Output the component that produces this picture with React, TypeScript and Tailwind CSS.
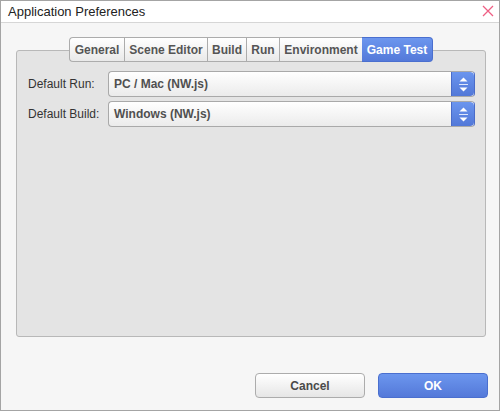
import { ReactNode } from "react"

const tabs = [
  { label: "General", w: "w-[55px]" },
  { label: "Scene Editor", w: "w-[83px]" },
  { label: "Build", w: "w-[39px]" },
  { label: "Run", w: "w-[33px]" },
  { label: "Environment", w: "w-[83px]" },
  { label: "Game Test", w: "w-[71px]", active: true },
]

const Spinner = () => (
  <div className="flex h-full w-[23px] flex-col items-center justify-center gap-[2px] rounded-r-[4px] border-l border-[#4a6cc9] bg-gradient-to-b from-[#6b95ee] to-[#5278d8]">
    <svg width="9" height="5" viewBox="0 0 9 5"><path d="M0.5 4.5 L4.5 0.5 L8.5 4.5 Z" fill="#fff" /></svg>
    <div className="h-px w-[9px] bg-[#dfe7fa]" />
    <svg width="9" height="5" viewBox="0 0 9 5"><path d="M0.5 0.5 L4.5 4.5 L8.5 0.5 Z" fill="#fff" /></svg>
  </div>
)

const SelectRow = ({ label, value }: { label: string; value: string }) => (
  <div className="flex items-center">
    <span className="w-[80px] text-[12px] text-[#333]">{label}</span>
    <div className="flex h-[26px] w-[367px] items-center overflow-hidden rounded-[4px] border border-[#a9a9a9] border-r-[#4a6cc9] bg-gradient-to-b from-white to-[#ebebeb]">
      <span className="flex-1 pl-[5px] text-[12px] font-bold text-[#505050]">{value}</span>
      <Spinner />
    </div>
  </div>
)

const Btn = ({ children, primary }: { children: ReactNode; primary?: boolean }) => (
  <button
    className={
      primary
        ? "h-[25px] w-[110px] rounded-[4px] border border-[#4a6fcf] bg-gradient-to-b from-[#6c96ee] to-[#5479d9] text-[12px] font-bold text-white"
        : "h-[25px] w-[110px] rounded-[4px] border border-[#acacac] bg-gradient-to-b from-white to-[#e6e6e6] text-[12px] font-bold text-[#4a4a4a]"
    }
  >
    {children}
  </button>
)

export default function App() {
  return (
    <div className="flex h-[411px] w-[500px] flex-col border border-[#a4a4a4] bg-[#f6f6f6] font-['Liberation_Sans',Arial,sans-serif]">
      <div className="flex h-[22px] items-center justify-between border-b border-[#d6d6d6] bg-white pl-[7px] pr-[5px]">
        <span className="text-[13px] text-[#222]">Application Preferences</span>
        <svg width="12" height="12" viewBox="0 0 12 12" className="mb-px">
          <path d="M1 1 L11 11 M11 1 L1 11" stroke="#ef5f84" strokeWidth="1.3" />
        </svg>
      </div>

      <div className="flex flex-1 flex-col pl-[15px] pt-[14px]">
        <div className="relative z-10 -mb-[12px] flex w-[470px] justify-center">
          <div className="flex h-[25px]">
            {tabs.map((t, i) => (
              <div
                key={t.label}
                className={[
                  "flex items-center justify-center border-y text-[12px] font-bold",
                  t.w,
                  t.active
                    ? "rounded-r-[4px] border-r border-[#4a6fcf] bg-gradient-to-b from-[#6c96ee] to-[#5479d9] text-white"
                    : "border-l border-[#acacac] bg-gradient-to-b from-white to-[#e9e9e9] text-[#555]",
                  i === 0 ? "rounded-l-[4px]" : "",
                ].join(" ")}
              >
                {t.label}
              </div>
            ))}
          </div>
        </div>
        <div className="flex h-[287px] w-[470px] flex-col gap-[4px] rounded-[3px] border border-[#b8b8b8] bg-[#e4e4e4] pl-[11px] pt-[20px]">
          <SelectRow label="Default Run:" value="PC / Mac (NW.js)" />
          <SelectRow label="Default Build:" value="Windows (NW.js)" />
        </div>
        <div className="flex-1" />
        <div className="flex justify-end gap-[13px] pb-[12px] pr-[11px]">
          <Btn>Cancel</Btn>
          <Btn primary>OK</Btn>
        </div>
      </div>
    </div>
  )
}
